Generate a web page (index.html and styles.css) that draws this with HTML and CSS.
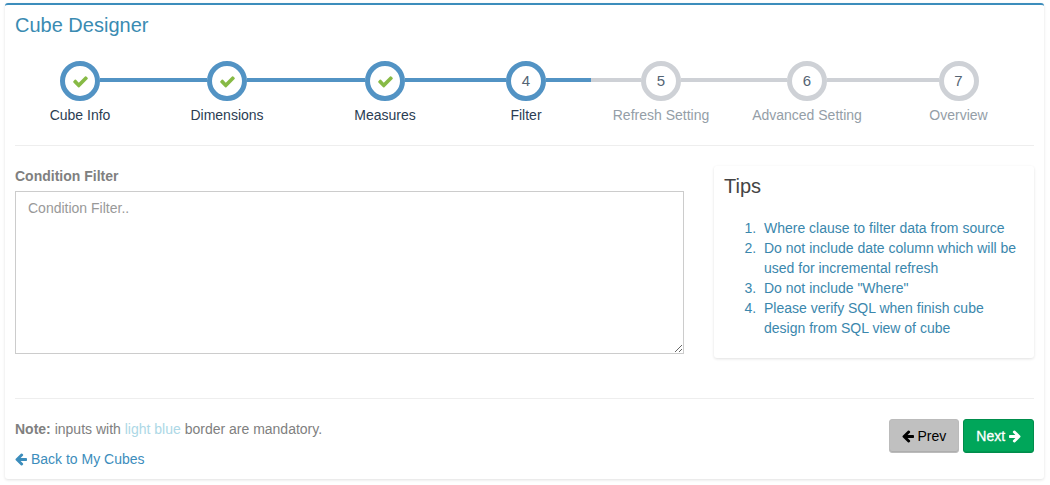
FILE: index.html
```html
<!DOCTYPE html>
<html lang="en">
<head>
<meta charset="utf-8">
<meta name="viewport" content="width=device-width, initial-scale=1">
<title>Cube Designer</title>
<link rel="stylesheet" href="styles.css">
</head>
<body>
<svg class="sprite" aria-hidden="true">
  <symbol id="check" viewBox="0 0 1792 1792"><path d="M1671 566q0 40-28 68l-724 724-136 136q-28 28-68 28t-68-28l-136-136-362-362q-28-28-28-68t28-68l136-136q28-28 68-28t68 28l294 295 656-657q28-28 68-28t68 28l136 136q28 28 28 68z"/></symbol>
  <symbol id="arrow-left" viewBox="0 0 1536 1792"><path d="M1536 896v128q0 53-32.500 90.500t-84.500 37.500h-704l293 294q38 36 38 90t-38 90l-75 76q-37 37-90 37-52 0-91-37l-651-652q-37-37-37-90 0-52 37-91l651-650q38-38 91-38 52 0 90 38l75 74q38 38 38 91t-38 91l-293 293h704q52 0 84.500 37.500t32.500 90.500z"/></symbol>
  <symbol id="arrow-right" viewBox="0 0 1536 1792"><path transform="matrix(-1 0 0 1 1536 0)" d="M1536 896v128q0 53-32.500 90.500t-84.500 37.500h-704l293 294q38 36 38 90t-38 90l-75 76q-37 37-90 37-52 0-91-37l-651-652q-37-37-37-90 0-52 37-91l651-650q38-38 91-38 52 0 90 38l75 74q38 38 38 91t-38 91l-293 293h704q52 0 84.500 37.500t32.500 90.500z"/></symbol>
</svg>
<main class="box">
  <h1 class="box-title">Cube Designer</h1>
  <ol class="steps">
    <li class="step active"><span class="circle"><svg class="check"><use href="#check"/></svg></span><span class="step-title">Cube Info</span></li>
    <li class="step active"><span class="circle"><svg class="check"><use href="#check"/></svg></span><span class="step-title">Dimensions</span></li>
    <li class="step active"><span class="circle"><svg class="check"><use href="#check"/></svg></span><span class="step-title">Measures</span></li>
    <li class="step active"><span class="circle">4</span><span class="step-title">Filter</span></li>
    <li class="step"><span class="circle">5</span><span class="step-title">Refresh Setting</span></li>
    <li class="step"><span class="circle">6</span><span class="step-title">Advanced Setting</span></li>
    <li class="step"><span class="circle">7</span><span class="step-title">Overview</span></li>
  </ol>
  <div class="content">
    <div class="field">
      <label class="field-label" for="filter">Condition Filter</label>
      <textarea class="field-input" id="filter" placeholder="Condition Filter.."></textarea>
    </div>
    <aside class="tips">
      <h2 class="tips-title">Tips</h2>
      <ol class="tips-list">
        <li>Where clause to filter data from source</li>
        <li>Do not include date column which will be used for incremental refresh</li>
        <li>Do not include "Where"</li>
        <li>Please verify SQL when finish cube design from SQL view of cube</li>
      </ol>
    </aside>
  </div>
  <footer class="footer">
    <div class="notes">
      <p class="note"><strong>Note:</strong> inputs with <span class="mandatory">light blue</span> border are mandatory.</p>
      <a class="back" href="#"><svg class="arrow"><use href="#arrow-left"/></svg> Back to My Cubes</a>
    </div>
    <div class="actions">
      <button class="btn prev" type="button"><svg class="arrow"><use href="#arrow-left"/></svg> Prev</button>
      <button class="btn next" type="button">Next <svg class="arrow"><use href="#arrow-right"/></svg></button>
    </div>
  </footer>
</main>
</body>
</html>
```
FILE: styles.css
```css
@counter-style spaced-decimal {
  system: extends decimal;
  suffix: ".\00a0\00a0";
}

* {
  box-sizing: border-box;
}

body {
  margin: 0;
  padding: 3px 6px 6px 5px;
  background: #fff;
  color: #808080;
  font: 14px/20px "Helvetica Neue", Helvetica, "Liberation Sans", Arial, sans-serif;
}

.sprite {
  display: none;
}

.box {
  padding: 10px;
  border-top: 2px solid #3c8dbc;
  border-radius: 3px;
  background: #fff;
  box-shadow: 0 1px 3px rgba(0, 0, 0, 0.12);
}

.box-title {
  margin: 0;
  color: #3a8bb2;
  font-size: 20px;
  font-weight: 400;
  line-height: 20px;
}

.steps {
  display: grid;
  grid-template-columns: 130fr 164fr 152fr 130fr 140fr 152fr 151fr;
  margin: 0;
  padding: 26px 0 20px;
  border-bottom: 1px solid #eee;
  list-style: none;
}

.step {
  --line: #ced1d6;
  display: grid;
  grid-template-columns: 1fr 40px 1fr;
  color: #949ea7;
}

.step.active {
  --line: #5293c4;
  color: #2b3d53;
}

.step::before,
.step::after {
  content: "";
  height: 4px;
  margin-top: 17px;
  background: var(--line);
}

.step:first-child::before,
.step:last-child::after {
  background: none;
}

.step::before {
  grid-area: 1 / 1;
}

.step::after {
  grid-area: 1 / 3;
}

.circle {
  grid-area: 1 / 2;
  display: flex;
  align-items: center;
  justify-content: center;
  height: 40px;
  border: 5px solid var(--line);
  border-radius: 50%;
  background: #fff;
  color: #546474;
  font-size: 15px;
}

.check {
  width: 17px;
  height: 17px;
  fill: #87ba45;
}

.step-title {
  grid-column: 1 / -1;
  margin-top: 4px;
  text-align: center;
}

.content {
  display: grid;
  grid-template-columns: 669fr 320fr;
  gap: 30px;
  align-items: start;
  padding: 20px 0 40px;
}

.field {
  display: flex;
  flex-direction: column;
  gap: 5px;
}

.field-label {
  font-weight: 700;
}

.field-input {
  width: 100%;
  height: 163px;
  padding: 6px 12px;
  border: 1px solid #ccc;
  border-radius: 0;
  background: #fff;
  color: #555;
  font: inherit;
}

.field-input::placeholder {
  color: #999;
}

.tips {
  padding: 10px 10px 20px;
  border-radius: 3px;
  box-shadow: 0 1px 3px rgba(0, 0, 0, 0.12);
}

.tips-title {
  margin: 0 0 22px;
  color: #444;
  font-size: 20px;
  font-weight: 400;
  line-height: 20px;
}

.tips-list {
  margin: 0;
  padding-left: 40px;
  color: #3a87ad;
  list-style: spaced-decimal;
}

.footer {
  display: flex;
  justify-content: space-between;
  padding-top: 20px;
  border-top: 1px solid #eee;
}

.note {
  margin: 0 0 10px;
}

.mandatory {
  color: #add8e6;
}

.back {
  color: #3c8dbc;
  text-decoration: none;
}

.arrow {
  width: 12px;
  height: 14px;
  vertical-align: -2px;
  fill: currentColor;
}

.actions {
  display: flex;
  gap: 4px;
  align-items: flex-start;
}

.btn {
  padding: 6px 12px;
  border: 1px solid #bbb;
  border-radius: 3px;
  box-shadow: inset 0 -1px 0 rgba(0, 0, 0, 0.09);
  font: inherit;
  white-space: nowrap;
}

.prev {
  background: #c0c0c0;
  color: #000;
}

.next {
  border-color: #008d4c;
  background: #00a65a;
  color: #fff;
  -webkit-text-stroke: 0.3px;
}
```
